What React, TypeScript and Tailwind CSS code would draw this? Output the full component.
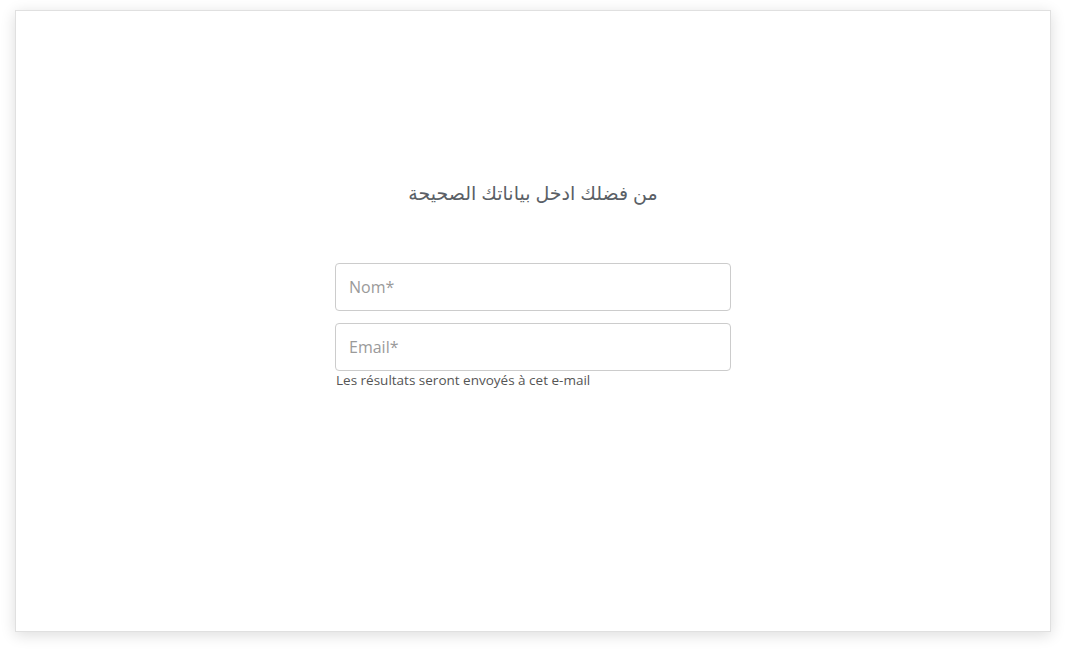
import React from 'react';

const App: React.FC = () => {
  return (
    <div
      className="min-h-screen w-full bg-white pt-[10px] pl-[15px]"
      style={{ fontFamily: '"Open Sans", "DejaVu Sans", sans-serif' }}
    >
      <div className="flex h-[622px] w-[1036px] flex-col items-center border border-[#e0e0e0] bg-white pt-[169px] shadow-[0_3px_14px_rgba(0,0,0,0.14)]">
        <h2 dir="rtl" className="text-[19px] leading-[26px] text-[#5a5f66]">
          من فضلك ادخل بياناتك الصحيحة
        </h2>

        <form className="mt-[57px] flex w-[396px] flex-col">
          <input
            type="text"
            placeholder="Nom*"
            className="h-[48px] w-full rounded-[4px] border border-[#cccccc] px-[13px] text-[16px] text-[#333] outline-none placeholder:text-[#9a9a9a]"
          />
          <input
            type="email"
            placeholder="Email*"
            className="mt-[12px] h-[48px] w-full rounded-[4px] border border-[#cccccc] px-[13px] text-[16px] text-[#333] outline-none placeholder:text-[#9a9a9a]"
          />
          <p className="mt-[0px] pl-[1px] text-[13.5px] leading-[18px] text-[#555555]">
            Les résultats seront envoyés à cet e-mail
          </p>
        </form>
      </div>
    </div>
  );
};

export default App;
